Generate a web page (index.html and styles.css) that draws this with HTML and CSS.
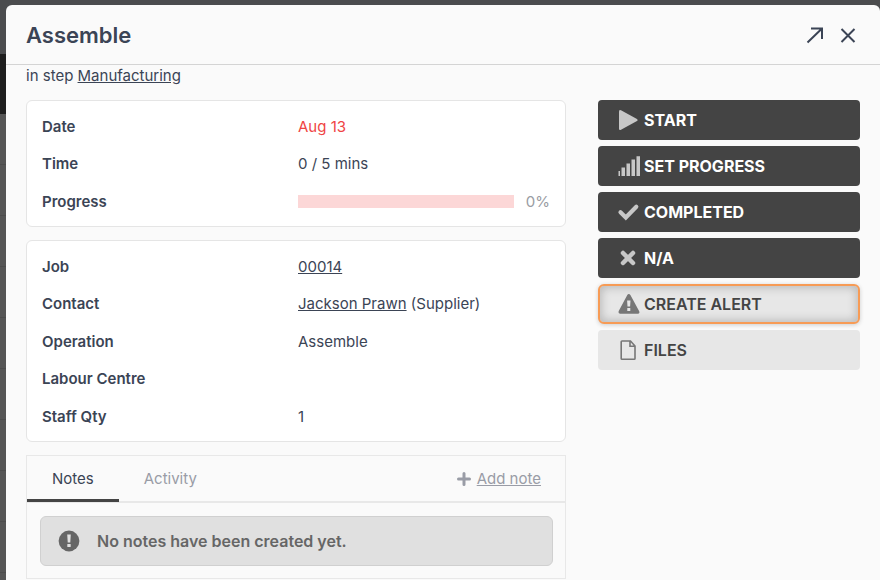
FILE: index.html
```html
<!DOCTYPE html>
<html lang="en">
<head>
    <meta charset="UTF-8">
    <meta name="viewport" content="width=device-width, initial-scale=1.0">
    <title>Assemble</title>
    <link rel="stylesheet" href="styles.css">
</head>
<body>
    <div class="backdrop-nav"></div>
    <main class="modal">
        <header class="modal-header">
            <h1>Assemble</h1>
            <button class="icon-button" type="button" aria-label="Open in full page">
                <svg width="18" height="18" viewBox="0 0 18 18"><path d="M1.500 16.500L16 2.500M5 2.500h11v10.500" fill="none" stroke="currentColor" stroke-width="2"/></svg>
            </button>
            <button class="icon-button" type="button" aria-label="Close">
                <svg width="18" height="18" viewBox="0 0 18 18"><path d="M2.500 3l13 13M15.500 3l-13 13" fill="none" stroke="currentColor" stroke-width="2"/></svg>
            </button>
        </header>
        <p class="step">in step <a href="#">Manufacturing</a></p>
        <div class="columns">
            <div class="details">
                <dl class="card">
                    <dt>Date</dt>
                    <dd class="overdue">Aug 13</dd>
                    <dt>Time</dt>
                    <dd>0 / 5 mins</dd>
                    <dt>Progress</dt>
                    <dd class="progress"><span class="progress-bar"></span><span class="progress-value">0%</span></dd>
                </dl>
                <dl class="card">
                    <dt>Job</dt>
                    <dd><a href="#">00014</a></dd>
                    <dt>Contact</dt>
                    <dd><a href="#">Jackson Prawn</a> (Supplier)</dd>
                    <dt>Operation</dt>
                    <dd>Assemble</dd>
                    <dt>Labour Centre</dt>
                    <dd></dd>
                    <dt>Staff Qty</dt>
                    <dd>1</dd>
                </dl>
                <section class="notes">
                    <div class="tabs">
                        <button class="tab active" type="button">Notes</button>
                        <button class="tab" type="button">Activity</button>
                        <a class="add-note" href="#">
                            <svg width="14" height="14" viewBox="0 0 14 14"><path d="M7 1.500v11M1.500 7h11" stroke="currentColor" stroke-width="3" stroke-linecap="round"/></svg>
                            <span>Add note</span>
                        </a>
                    </div>
                    <div class="notes-body">
                        <div class="message">
                            <svg width="22" height="22" viewBox="0 0 22 22"><circle cx="11" cy="11" r="10.400" fill="#666"/><path d="M9.200 4.600h3.600l-.5 8h-2.600z" fill="#e0e0e0"/><rect x="9.300" y="14" width="3.400" height="3" rx=".5" fill="#e0e0e0"/></svg>
                            <span>No notes have been created yet.</span>
                        </div>
                    </div>
                </section>
            </div>
            <div class="actions">
                <button class="action dark" type="button">
                    <svg width="24" height="24" viewBox="0 0 24 24"><path d="M3 3.500Q3 1.300 5 2.300L20.500 10.700Q22.800 12 20.500 13.300L5 21.700Q3 22.700 3 20.500z"/></svg>
                    Start
                </button>
                <button class="action dark" type="button">
                    <svg width="24" height="24" viewBox="0 0 24 24"><path d="M2.500 17H4v5H2.500zM5.500 13.500H9V22H5.500zM10.500 9.500H14V22h-3.500zM15.500 5.500H19V22h-3.500zM20.500 2.300H24V22h-3.500z"/></svg>
                    Set progress
                </button>
                <button class="action dark" type="button">
                    <svg width="24" height="24" viewBox="0 0 24 24"><path d="M4.500 12.300l5.300 5.200L20.300 6.800" fill="none" stroke="currentColor" stroke-width="4.200" stroke-linecap="round"/></svg>
                    Completed
                </button>
                <button class="action dark" type="button">
                    <svg width="24" height="24" viewBox="0 0 24 24"><path d="M7 7l10 10M17 7l-10 10" fill="none" stroke="currentColor" stroke-width="4.500" stroke-linecap="round"/></svg>
                    N/A
                </button>
                <button class="action light focused" type="button">
                    <svg width="24" height="24" viewBox="0 0 24 24"><path d="M12.800 2Q13.800 2 14.400 3l8.800 16.200Q24 21.500 22 21.800H4Q2 21.500 2.600 19.200L11.300 3Q11.800 2 12.800 2z"/><path d="M11.100 8.500h3.400l-.4 6h-2.600zM11.300 16h3v3h-3z" fill="#e7e7e7"/></svg>
                    Create alert
                </button>
                <button class="action light" type="button">
                    <svg width="24" height="24" viewBox="0 0 24 24"><path d="M6 3h8.500l4.500 5v12.500q0 .8-.8.800H6q-.8 0-.8-.8V3.800Q5.200 3 6 3zM14 3v5.300h5" fill="none" stroke="currentColor" stroke-width="1.600"/></svg>
                    Files
                </button>
            </div>
        </div>
    </main>
</body>
</html>
```
FILE: styles.css
```css
* {
    box-sizing: border-box;
}
body {
    margin: 0;
    padding: 5px 0 0 6px;
    min-height: 100vh;
    display: flex;
    font-family: Inter, "Liberation Sans", sans-serif;
    font-size: 15px;
    line-height: 22px;
    color: #3b4455;
    background: repeating-linear-gradient(#555, #555 50px, #4c4c4c 50px, #4c4c4c 51px) 0 12px;
}
h1, p, dl, dd {
    margin: 0;
}
a {
    color: inherit;
}
button {
    font: inherit;
    color: inherit;
    border: none;
    background: none;
    cursor: pointer;
}
svg {
    flex: none;
}

/* Page behind the modal */
.backdrop-nav {
    position: absolute;
    top: 0;
    left: 0;
    right: 0;
    height: 114px;
    background: linear-gradient(#4b4c4e 54px, #1e1e1e 54px);
}

/* Modal */
.modal {
    position: relative;
    flex: 1;
    background: #fafafa;
    border-radius: 6px 6px 0 0;
}
.modal-header {
    display: flex;
    align-items: center;
    height: 60px;
    padding: 0 23px 0 20px;
    border-bottom: 1px solid #d4d4d4;
}
h1 {
    flex: 1;
    font-size: 22px;
    font-weight: 600;
    line-height: 32px;
}
.icon-button {
    display: flex;
    padding: 0;
    margin-left: 15px;
}
.step {
    padding: 0 20px;
}
.columns {
    display: grid;
    grid-template-columns: 1fr 262px;
    gap: 32px;
    padding: 13px 20px 0;
}

/* Detail cards */
.card {
    display: grid;
    grid-template-columns: 256px 1fr;
    grid-auto-rows: 37px 38px;
    align-items: center;
    margin-bottom: 13px;
    padding: 7px 15px 6px;
    background: #fff;
    border: 1px solid #e5e5e5;
    border-radius: 6px;
}
dt {
    font-weight: 600;
}
.overdue {
    color: #ef4444;
}
.progress {
    display: flex;
    align-items: center;
    gap: 12px;
}
.progress-bar {
    flex: 1;
    height: 13px;
    background: #fcd7d7;
}
.progress-value {
    color: #999ca3;
}

/* Notes */
.notes {
    border: 1px solid #e8e8e8;
}
.tabs {
    display: flex;
    height: 47px;
    border-bottom: 2px solid #e8e8e8;
}
.tab {
    height: 46px;
    padding: 3px 25px 0;
    border-bottom: 3px solid transparent;
    color: #999ca6;
}
.tab.active {
    color: #3b4455;
    border-color: #444;
}
.add-note {
    display: flex;
    align-items: center;
    gap: 6px;
    margin-left: auto;
    padding-right: 24px;
    color: #999ca6;
    text-decoration: none;
}
.add-note span {
    text-decoration: underline;
}
.notes-body {
    padding: 13px 12px 12px 13px;
}
.message {
    display: flex;
    align-items: center;
    gap: 17px;
    height: 50px;
    padding: 0 17px;
    font-size: 16px;
    font-weight: 600;
    color: #666;
    background: #e0e0e0;
    border: 1px solid #d0d0d0;
    border-radius: 6px;
}

/* Action buttons */
.actions {
    display: flex;
    flex-direction: column;
    gap: 6px;
}
.action {
    display: flex;
    align-items: center;
    gap: 4px;
    height: 40px;
    padding: 0 18px;
    border-radius: 4px;
    font-size: 16px;
    font-weight: 600;
    text-transform: uppercase;
}
.action svg {
    fill: currentColor;
}
.action.dark {
    font-weight: 700;
    color: #fff;
    background: #444;
}
.action.dark svg {
    color: #c7c7c7;
}
.action.light {
    color: #444;
    background: #e7e7e7;
}
.action.light svg {
    color: #777;
}
.action.focused {
    border: 2px solid #f79b55;
    border-radius: 6px;
    padding: 0 16px;
    box-shadow: inset 0 0 8px 2px #bbb, 0 1px 4px #ccc;
}
```
